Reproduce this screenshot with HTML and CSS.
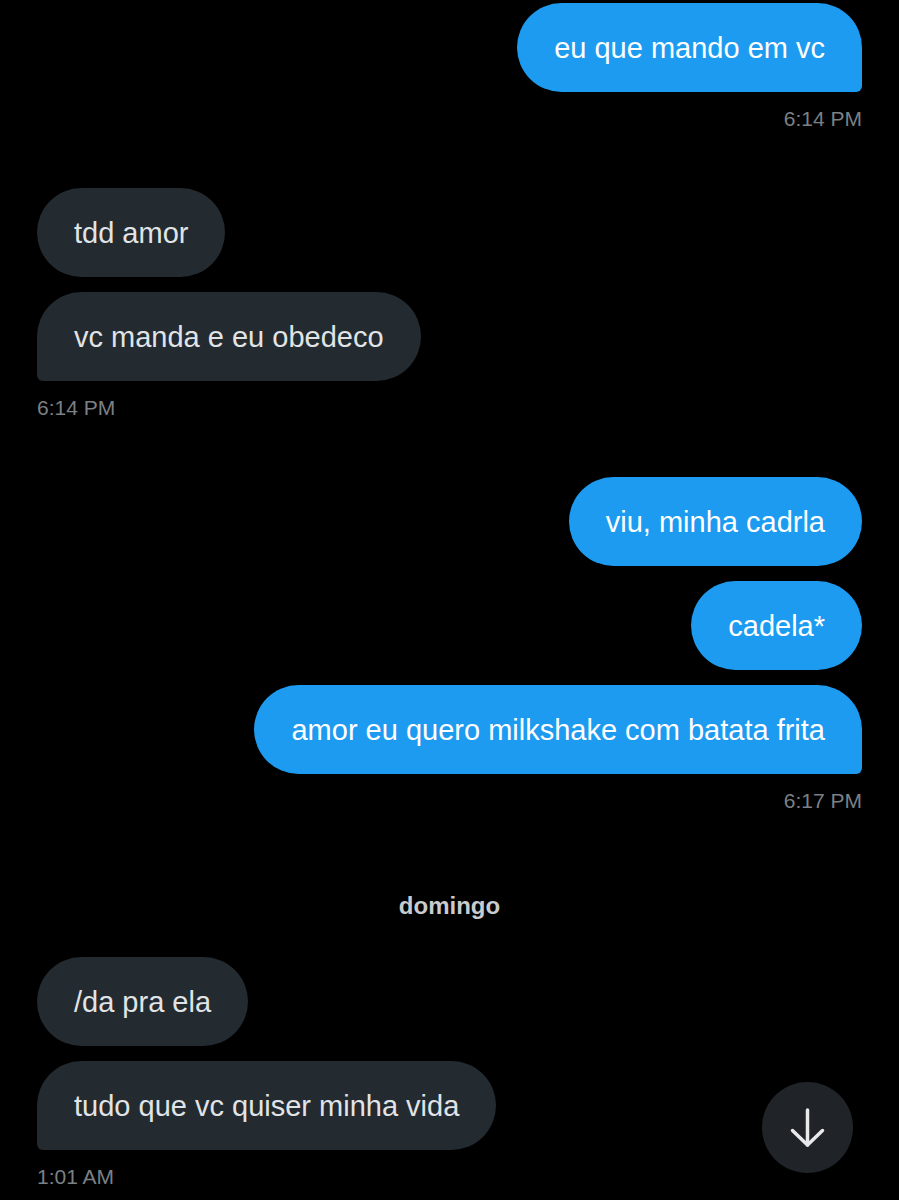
FILE: index.html
```html
<!DOCTYPE html>
<html lang="pt">
<head>
<meta charset="utf-8">
<title>Mensagens</title>
<link rel="stylesheet" href="styles.css">
</head>
<body>
<main class="chat">
  <section class="group sent gap-after">
    <div class="bubble last">eu que mando em vc</div>
    <div class="time">6:14 PM</div>
  </section>

  <section class="group received gap-after">
    <div class="bubble">tdd amor</div>
    <div class="bubble last">vc manda e eu obedeco</div>
    <div class="time">6:14 PM</div>
  </section>

  <section class="group sent before-day">
    <div class="bubble">viu, minha cadrla</div>
    <div class="bubble">cadela*</div>
    <div class="bubble last">amor eu quero milkshake com batata frita</div>
    <div class="time">6:17 PM</div>
  </section>

  <div class="day">domingo</div>

  <section class="group received">
    <div class="bubble">/da pra ela</div>
    <div class="bubble last">tudo que vc quiser minha vida</div>
    <div class="time">1:01 AM</div>
  </section>

  <button class="scroll-down" aria-label="Ir para o fim">
    <svg width="91" height="91" viewBox="0 0 91 91" fill="none" stroke="#e7e9ea" stroke-width="3.5" stroke-linecap="round" stroke-linejoin="round">
      <path d="M45.5 28 V63"/>
      <path d="M30.5 48.5 L45.5 63 L60.5 48.5"/>
    </svg>
  </button>
</main>
</body>
</html>
```

FILE: styles.css
```css
html, body {
  margin: 0;
  padding: 0;
  background: #000;
}

body {
  font-family: "Liberation Sans", Arial, Helvetica, sans-serif;
  width: 899px;
  height: 1200px;
  overflow: hidden;
}

.chat {
  display: flex;
  flex-direction: column;
  padding: 3px 37px 0;
}

.group {
  display: flex;
  flex-direction: column;
  gap: 15px;
}

.gap-after {
  margin-bottom: 57px;
}

.before-day {
  margin-bottom: 79px;
}

.sent {
  align-items: flex-end;
}

.received {
  align-items: flex-start;
}

.bubble {
  font-size: 29px;
  line-height: 35px;
  padding: 28px 37px 26px 37px;
  border-radius: 45px;
  white-space: nowrap;
}

.sent .bubble {
  background: #1d9bf0;
  color: #ffffff;
}

.received .bubble {
  background: #232a30;
  color: #e1e4e6;
}

.sent .bubble.last {
  border-bottom-right-radius: 6px;
}

.received .bubble.last {
  border-bottom-left-radius: 6px;
}

.time {
  font-size: 21px;
  line-height: 24px;
  color: #7b8085;
}

.day {
  text-align: center;
  font-size: 24px;
  line-height: 27px;
  font-weight: bold;
  color: #c9cbcd;
  margin-bottom: 38px;
}

.scroll-down {
  position: fixed;
  right: 46px;
  bottom: 27px;
  width: 91px;
  height: 91px;
  padding: 0;
  border: none;
  border-radius: 50%;
  background: #202327;
  display: flex;
  align-items: center;
  justify-content: center;
}

.scroll-down svg {
  display: block;
}
```
